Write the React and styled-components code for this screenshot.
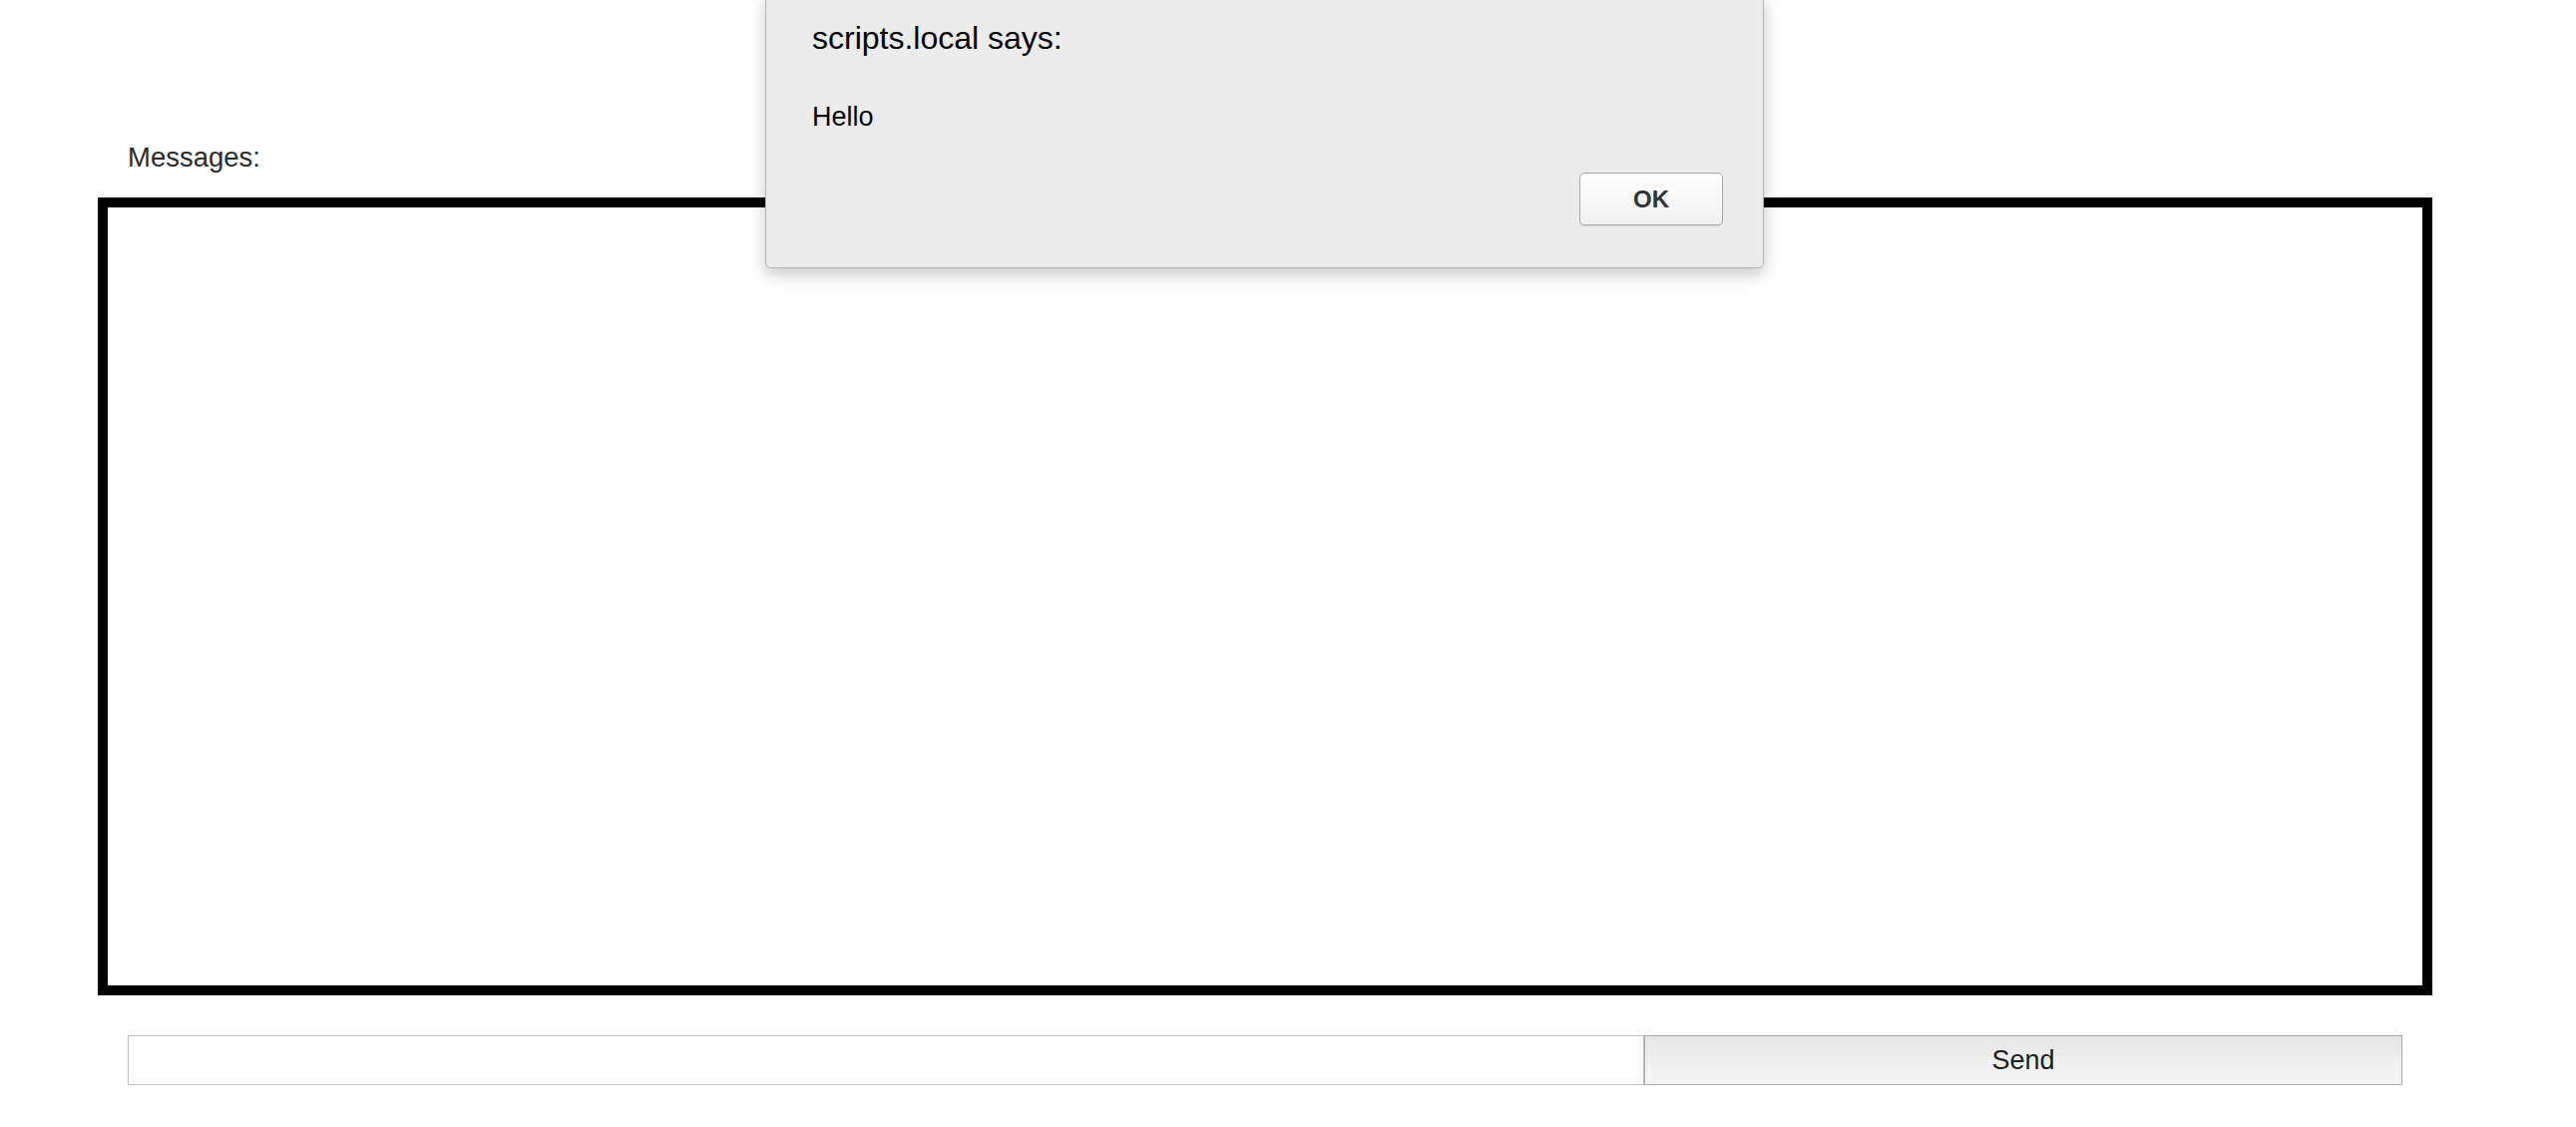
import React, { useState } from 'react';
import styled, { createGlobalStyle } from 'styled-components';

const GlobalStyle = createGlobalStyle`
    html, body {
        margin: 0;
        padding: 0;
        background: #ffffff;
        font-family: "Liberation Sans", Arial, sans-serif;
    }
`

const App = () => {
    const [text, setText] = useState('');
    const [messages] = useState([]);

    return(
        <Page>
            <GlobalStyle />
            <Label>Messages:</Label>
            <MessageBox>
                {messages.map((m, i) => <div key={i}>{m}</div>)}
            </MessageBox>
            <SendRow>
                <TextInput
                    value={text}
                    onChange={(ev) => setText(ev.target.value)}
                />
                <SendButton>Send</SendButton>
            </SendRow>

            <AlertDialog>
                <AlertTitle>scripts.local says:</AlertTitle>
                <AlertBody>Hello</AlertBody>
                <AlertFooter>
                    <OkButton>OK</OkButton>
                </AlertFooter>
            </AlertDialog>
        </Page>
    )
}

const Page = styled.div`
    position: relative;
    width: 2582px;
    height: 1130px;
    padding-top: 142px;
    box-sizing: border-box;
`

const Label = styled.div`
    margin-left: 128px;
    font-size: 27.5px;
    line-height: 32px;
    color: #2b2b2b;
`

const MessageBox = styled.div`
    margin: 24px 0 0 98px;
    width: 2340px;
    height: 800px;
    box-sizing: border-box;
    border: 10px solid #000;
`

const SendRow = styled.div`
    display: flex;
    margin: 40px 0 0 128px;
    width: 2280px;
    height: 50px;
`

const TextInput = styled.input`
    flex: 0 0 1520px;
    box-sizing: border-box;
    height: 100%;
    margin: 0;
    border: 1px solid #c4c4c4;
    border-radius: 0;
    font-size: 26px;
    padding: 0 8px;
    outline: none;
`

const SendButton = styled.button`
    flex: 0 0 760px;
    box-sizing: border-box;
    height: 100%;
    margin: 0;
    border: 1px solid #a9a9a9;
    border-radius: 0;
    background: linear-gradient(#e6e6e6, #f6f6f6);
    font-family: "Liberation Sans", Arial, sans-serif;
    font-size: 27px;
    color: #222;
    padding: 0;
`

const AlertDialog = styled.div`
    position: absolute;
    top: -4px;
    left: 767px;
    width: 1001px;
    box-sizing: border-box;
    padding: 4px 40px 42px 46px;
    background: #ececec;
    border: 1px solid #b4b4b4;
    border-radius: 0 0 5px 5px;
    box-shadow: 0 6px 16px rgba(0, 0, 0, 0.22);
    font-family: "Liberation Sans", Arial, sans-serif;
    color: #000;
`

const AlertTitle = styled.div`
    font-size: 32px;
    line-height: 40px;
    margin-top: 17px;
`

const AlertBody = styled.div`
    font-size: 27px;
    line-height: 32px;
    margin-top: 43px;
`

const AlertFooter = styled.div`
    display: flex;
    justify-content: flex-end;
    margin-top: 40px;
`

const OkButton = styled.button`
    width: 144px;
    height: 53px;
    box-sizing: border-box;
    border: 1px solid #aaaaaa;
    border-radius: 5px;
    background: linear-gradient(#ffffff, #f1f1f1);
    box-shadow: 0 1px 1px rgba(0, 0, 0, 0.12);
    font-family: "Liberation Sans", Arial, sans-serif;
    font-weight: bold;
    font-size: 24px;
    color: #333;
    padding: 0;
`

export default App
